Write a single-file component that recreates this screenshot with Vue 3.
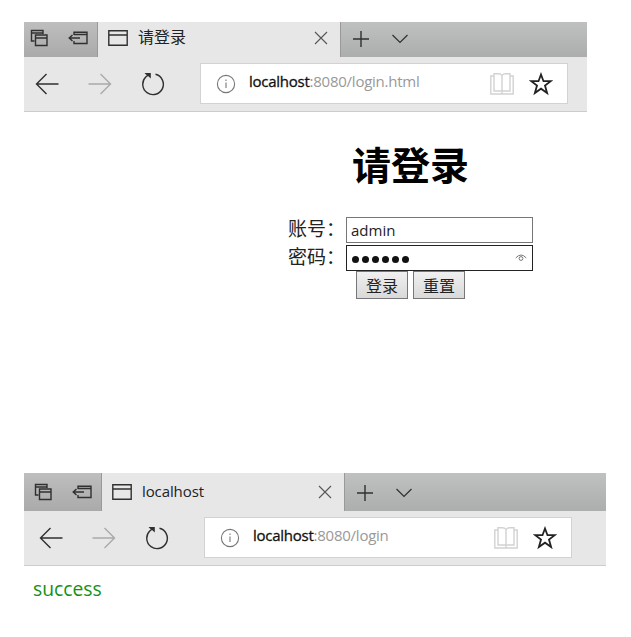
<script setup>
const windows = [
  { id: 'form', title: '请登录', path: ':8080/login.html' },
  { id: 'result', title: 'localhost', path: ':8080/login' },
]
</script>

<template>
  <main class="page">
    <section v-for="win in windows" :key="win.id" class="window" :class="win.id">
      <header class="chrome">
        <div class="strip">
          <div class="tools">
            <svg class="i-stack" width="18" height="18" viewBox="0 0 18 18">
              <path d="M4.5 12H1.5V1.5H13V5M1.5 4H13" />
              <path d="M5.5 6H17V16.5H5.5ZM5.5 9H17" />
            </svg>
            <svg class="i-aside" width="20" height="14" viewBox="0 0 20 14">
              <path d="M6 4V1.2H19V12.5H6V10M6 3.5H19M1 7H12M4.5 4L1.2 7L4.5 10" />
            </svg>
          </div>
          <div class="tab">
            <svg class="i-page" width="20" height="16" viewBox="0 0 20 16">
              <path d="M.8.8H19.2V15.2H.8ZM.8 5H19.2" />
            </svg>
            <span class="title">{{ win.title }}</span>
            <svg class="i-close" width="14" height="14" viewBox="0 0 14 14">
              <path d="M1 1L13 13M13 1L1 13" />
            </svg>
          </div>
          <div class="rest">
            <svg width="16" height="16" viewBox="0 0 16 16"><path d="M8 0V16M0 8H16" /></svg>
            <svg class="i-down" width="16" height="10" viewBox="0 0 16 10"><path d="M.5 1L8 8.5L15.5 1" /></svg>
          </div>
        </div>
        <div class="toolbar">
          <svg class="i-nav" width="24" height="22" viewBox="0 0 24 22">
            <path d="M11.5 1L1.5 11L11.5 21M1.5 11H23.5" />
          </svg>
          <svg class="i-nav forward" width="24" height="22" viewBox="0 0 24 22">
            <path d="M12.5 1L22.5 11L12.5 21M22.5 11H.5" />
          </svg>
          <svg class="i-reload" width="24" height="24" viewBox="0 0 24 24">
            <path d="M14.5 2.3A10.3 10.3 0 1 1 5 4.8L8 2.5" />
            <path class="head" d="M3.5 1H9.8V6.5L7.6 4.6L5.4 3Z" />
          </svg>
          <div class="address">
            <svg class="i-info" width="20" height="20" viewBox="0 0 20 20">
              <circle cx="10" cy="10" r="8.6" /><path d="M10 8.5V14M10 5.5V7" />
            </svg>
            <span class="url"><b>localhost</b>{{ win.path }}</span>
            <svg class="i-book" width="24" height="22" viewBox="0 0 24 22">
              <path d="M12 2.5Q11 .8 8 .8H4V18H12V2.5Q13 .8 16 .8H20V18H12M4 3H.8V21H23.2V3H20M12 18V21" />
            </svg>
            <svg class="i-star" width="24" height="24" viewBox="0 0 24 24">
              <path d="M12 2.5L14.5 9.2H21.7L16 13.6L18.1 21L12 16.7L5.9 21L8 13.6L2.3 9.2H9.5Z" />
            </svg>
          </div>
        </div>
      </header>

      <form v-if="win.id === 'form'" class="login" @submit.prevent>
        <h1>请登录</h1>
        <label class="row"><span>账号：</span><span class="field">admin</span></label>
        <label class="row">
          <span>密码：</span>
          <span class="field focused">
            <span class="dots"><i v-for="n in 6" :key="n"></i></span>
            <svg class="i-eye" width="12" height="8" viewBox="0 0 12 8">
              <path d="M.7 4Q6-2 11.3 4" /><circle cx="6" cy="4.5" r="1.9" />
            </svg>
          </span>
        </label>
        <div class="buttons">
          <button type="submit">登录</button>
          <button type="reset">重置</button>
        </div>
      </form>
      <p v-else class="message">success</p>
    </section>
  </main>
</template>

<style>
body {
  margin: 0;
  background: #fff;
}
</style>

<style scoped>
.page {
  box-sizing: border-box;
  width: 631px;
  height: 637px;
  padding: 22px 0 0 24px;
  overflow: hidden;
  background: #fff;
  color: #222;
  font-family: "Open Sans", "Noto Sans CJK SC", sans-serif;
}
svg {
  display: block;
  flex: none;
  fill: none;
  stroke: #303030;
  stroke-width: 1.4;
}
.window.form {
  height: 451px;
}
.chrome {
  width: 563px;
  background: #e7e7e7;
}
.result .chrome {
  width: 582px;
}
.strip {
  display: flex;
  height: 35px;
}
.result .strip {
  height: 38px;
}
.tools,
.tab,
.rest {
  box-sizing: border-box;
  display: flex;
  align-items: flex-end;
}
.tools {
  width: 74px;
  padding: 0 0 10px 6px;
  gap: 20px;
  background: linear-gradient(#bebebe, #aaa);
  border-right: 1px solid #999;
}
.result .tools {
  width: 78px;
  padding-left: 10px;
}
.i-aside {
  margin-bottom: 2px;
}
.tab {
  width: 242px;
  padding: 0 12px 12px 10px;
}
.i-page {
  margin-bottom: -1px;
}
.title {
  flex: 1;
  margin: 0 0 -4px 10px;
  font-size: 16px;
  line-height: 24px;
  white-space: nowrap;
}
.result .title {
  font-size: 15px;
  letter-spacing: -0.1px;
}
.i-close {
  stroke: #555;
  stroke-width: 1.1;
}
.rest {
  flex: 1;
  padding: 0 0 10px 12px;
  gap: 23px;
  background: linear-gradient(#bfc0c0, #acadad);
  border-left: 1px solid #999;
}
.i-down {
  margin-bottom: 3px;
  stroke-width: 1.2;
}
.toolbar {
  box-sizing: border-box;
  display: flex;
  align-items: center;
  height: 55px;
  padding: 0 0 1px 11px;
  border-bottom: 1px solid #ccc;
}
.result .toolbar {
  padding-left: 15px;
}
.forward {
  margin-left: 29px;
  stroke: #aaa;
}
.i-reload {
  margin-left: 29px;
}
.i-reload .head {
  fill: #303030;
  stroke: none;
}
.address {
  box-sizing: border-box;
  display: flex;
  align-items: center;
  width: 368px;
  height: 41px;
  margin-left: 35px;
  padding: 0 14px 0 15px;
  border: 1px solid #d2d2d2;
  background: #fff;
}
.i-info {
  stroke: #777;
  stroke-width: 1.1;
}
.url {
  flex: 1;
  margin: -6px 0 0 13px;
  color: #999;
  font-size: 15px;
  line-height: 22px;
  letter-spacing: -0.25px;
  white-space: nowrap;
}
.url b {
  color: #111;
  font-weight: 500;
  -webkit-text-stroke: 0.3px #111;
}
.i-book {
  stroke: #d2d2d2;
}
.i-star {
  margin-left: 15px;
  stroke: #222;
  stroke-width: 1.8;
}
.login {
  display: flex;
  flex-direction: column;
  width: 300px;
  padding-left: 264px;
}
.login h1 {
  margin: 23px 0 26px 64px;
  color: #000;
  font: bold 39px/56px "Noto Sans CJK SC", sans-serif;
}
.row {
  display: flex;
  height: 26px;
  margin-bottom: 2px;
  font-size: 19px;
  line-height: 24px;
}
.row > span:first-child {
  width: 58px;
  white-space: nowrap;
}
.field {
  box-sizing: border-box;
  display: flex;
  align-items: center;
  width: 187px;
  height: 26px;
  padding: 0 5px 0 4px;
  border: 1px solid #777;
  font-size: 15px;
}
.focused {
  border-color: #222;
}
.dots {
  display: flex;
  flex: 1;
  gap: 3px;
  padding: 2px 0 0 1px;
}
.dots i {
  width: 7px;
  height: 7px;
  border-radius: 50%;
  background: #111;
}
.i-eye {
  stroke: #777;
  stroke-width: 1;
}
.buttons {
  display: flex;
  gap: 5px;
  margin: -2px 0 0 68px;
}
button {
  box-sizing: border-box;
  width: 52px;
  height: 28px;
  padding: 0;
  border: 1px solid #777;
  border-radius: 0;
  background: linear-gradient(#f0f0f0, #d9d9d9);
  color: #222;
  font: 16px/24px "Noto Sans CJK SC", sans-serif;
}
.message {
  margin: 10px 0 0 9px;
  color: #149114;
  font-size: 19.3px;
  line-height: 26px;
}
</style>
